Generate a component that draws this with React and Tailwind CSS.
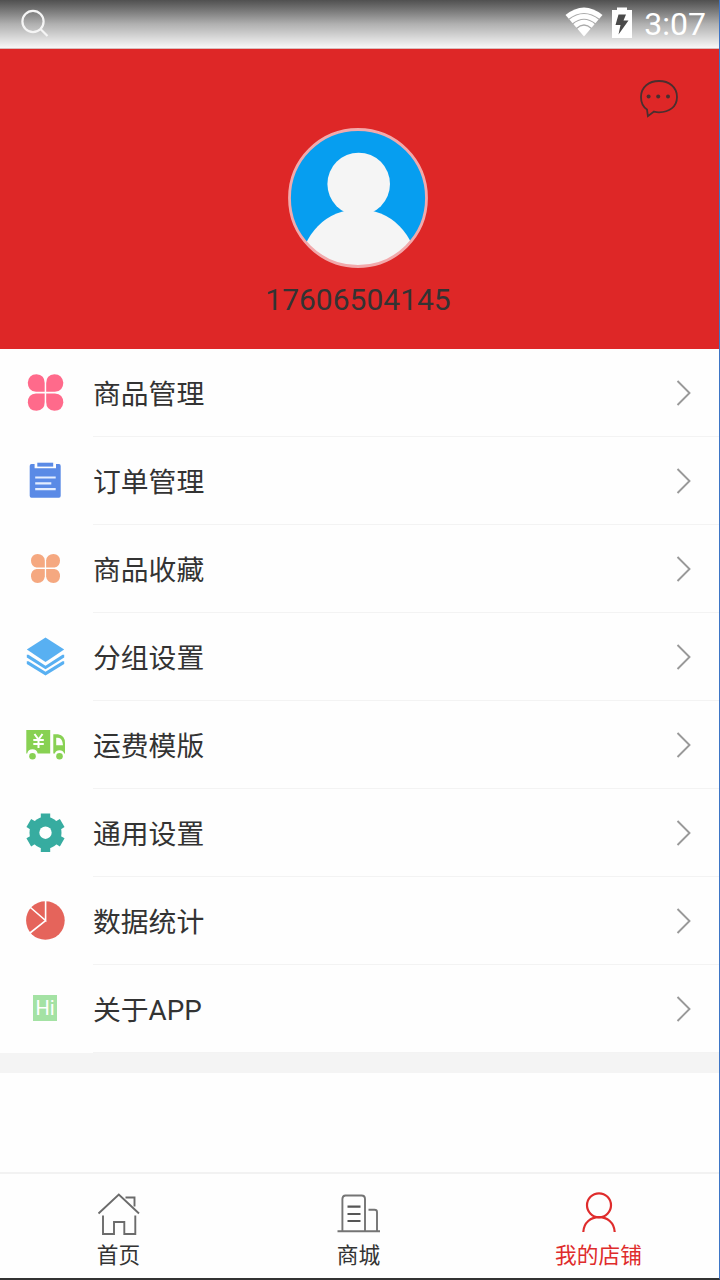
import React from 'react'

// Menu icons share a 40x40 box
const Icon = ({ children }) => (
  <svg viewBox="0 0 40 40" className="w-10 h-10 shrink-0">
    {children}
  </svg>
)

const GoodsIcon = () => (
  <Icon>
    <g fill="#ff6a8b">
      <path d="M19.7 18.8H11Q2.8 18 2.8 9.8Q3.5 1.2 11.5 1.2Q19.7 1.8 19.7 10Z" />
      <path d="M21.2 18.8H29.9Q38.3 18 38.3 9.8Q37.4 1.2 29.4 1.2Q21.2 1.8 21.2 10Z" />
      <path d="M19.7 20.5H11Q2.8 21.3 2.8 29.4Q3.5 37.7 11.5 37.7Q19.7 37.2 19.7 29Z" />
      <path d="M21.2 20.5H29.9Q38.3 21.3 38.3 29.4Q37.4 37.7 29.4 37.7Q21.2 37.2 21.2 29Z" />
    </g>
  </Icon>
)

const OrderIcon = () => (
  <Icon>
    <path d="M6.500 3H9.600V7.200H31V3H34Q35.700 3 35.700 5V34.800Q35.700 36.700 34 36.700H6.500Q4.700 36.700 4.700 34.800V5Q4.700 3 6.500 3Z" fill="#5a8ae6" />
    <path d="M12.300 1.700H28.200V5.600H12.300Z" fill="#5a8ae6" />
    <path d="M10.200 16.500H30.700M10.200 22.400H26.300M10.200 28.200H30.700" stroke="#e3edff" strokeWidth="2.200" />
  </Icon>
)

const FavoriteIcon = () => (
  <Icon>
    <g fill="#f5a880">
      <path d="M19.800 18.500H11.500Q6 17.500 6 11.500Q6.500 5 12.500 5Q19 5 19.800 11.500Z" />
      <path d="M21.100 18.500H29.500Q35 17.500 35 11.500Q34.500 5 28.500 5Q22 5 21.100 11.500Z" />
      <path d="M19.800 20.100H11.500Q6 21 6 27.500Q6.500 34 12.500 34Q19 34 19.800 27.500Z" />
      <path d="M21.100 20.100H29.500Q35 21 35 27.500Q34.500 34 28.500 34Q22 34 21.100 27.500Z" />
    </g>
  </Icon>
)

const GroupIcon = () => (
  <Icon>
    <g fill="#58b0f2">
      <path d="M20.500 0.500L39.200 12.600L20.500 25L1.800 12.600Z" />
      <path d="M1.800 17.800H3.500L20.500 28.700L37.500 17.800H39.200V20.500L20.500 32.200L1.800 20.500Z" />
      <path d="M1.800 24.300H3.500L20.500 34.700L37.500 24.300H39.200V27L20.500 38.400L1.800 27Z" />
    </g>
  </Icon>
)

const FreightIcon = () => (
  <Icon>
    <path d="M1.300 5H25.200V28.500H12.700A5.400 5.400 0 0 0 2.200 28.500H1.300Z" fill="#88d153" />
    <path d="M28.300 9.300H33Q40 10.500 40 18V28.500H39.200A5 5 0 0 0 29.800 28.500H28.300ZM31.200 12.700V20.300H38Q37.500 13 33 12.700Z" fill="#88d153" fillRule="evenodd" />
    <circle cx="7.500" cy="31.300" r="3.300" fill="#88d153" />
    <circle cx="34.500" cy="31.300" r="3.300" fill="#88d153" />
    <path d="M9.500 9L13.500 14.500L17.500 9M8.300 15H18.800M8.300 18.900H18.800M13.500 14V23" stroke="#fff" strokeWidth="2" fill="none" />
  </Icon>
)

const SettingsIcon = () => (
  <Icon>
    <g fill="#37aca0">
      <circle cx="20.500" cy="19.700" r="16" />
      <path d="M15.800 0.400H25.200V5L27 9H14L15.800 5ZM15.800 39H25.200V34.400L27 30.400H14L15.800 34.400Z" />
      <path d="M15.800 0.400H25.200V5L27 9H14L15.800 5ZM15.800 39H25.200V34.400L27 30.400H14L15.800 34.400Z" transform="rotate(60 20.500 19.700)" />
      <path d="M15.800 0.400H25.200V5L27 9H14L15.800 5ZM15.800 39H25.200V34.400L27 30.400H14L15.800 34.400Z" transform="rotate(120 20.500 19.700)" />
    </g>
    <circle cx="20.500" cy="19.700" r="6.200" fill="#fff" />
  </Icon>
)

const StatsIcon = () => (
  <Icon>
    <circle cx="20.400" cy="19.500" r="19.300" fill="#e5645b" />
    <path d="M20.600 0V19.600L5.500 6.500M20.600 19.600L5 32" stroke="#fff" strokeWidth="1.600" fill="none" />
  </Icon>
)

const AboutIcon = () => (
  <div className="w-10 h-10 shrink-0 flex items-start justify-center pt-1.5">
    <span className="w-6 h-[26px] bg-[#a4e2a4] text-white text-[20px] leading-[26px] text-center">
      Hi
    </span>
  </div>
)

const menuItems = [
  { label: '商品管理', icon: GoodsIcon },
  { label: '订单管理', icon: OrderIcon },
  { label: '商品收藏', icon: FavoriteIcon },
  { label: '分组设置', icon: GroupIcon },
  { label: '运费模版', icon: FreightIcon },
  { label: '通用设置', icon: SettingsIcon },
  { label: '数据统计', icon: StatsIcon },
  { label: '关于APP', icon: AboutIcon },
]

const HomeIcon = () => (
  <svg viewBox="0 0 44 44" className="w-11 h-11" fill="none" stroke="#6b6b6b" strokeWidth="1.900">
    <path d="M1.500 22.500L21.800 3.500L42 22.500M28.500 6.500H37.500V15.500M6 24.500V43H17V31H27.300V43H38.300V24.500" />
  </svg>
)

const MallIcon = () => (
  <svg viewBox="0 0 44 44" className="w-11 h-11" fill="none" stroke="#747474" strokeWidth="1.900">
    <path d="M0.500 40.300H43M5.400 40V8Q5.400 4.500 8.500 4.500H24.500Q28 4.500 28 8V40M31.500 18.700H37.500Q40 18.700 40 21V40" />
    <path d="M10.500 15.700H23.500M10.500 23H23.500M10.500 30H23.500" stroke="#555" strokeWidth="2.200" />
  </svg>
)

const ShopIcon = () => (
  <svg viewBox="0 0 44 44" className="w-11 h-11" fill="none" stroke="#df2c2c" strokeWidth="2.200">
    <circle cx="22" cy="14.300" r="12" />
    <path d="M6.300 41C6.800 31.500 13.800 26.200 22 26.200S37.200 31.500 37.700 41" />
  </svg>
)

const tabs = [
  { label: '首页', icon: HomeIcon },
  { label: '商城', icon: MallIcon },
  { label: '我的店铺', icon: ShopIcon, active: true },
]

const StatusBar = () => (
  <header className="h-[49px] shrink-0 flex items-center justify-between pl-5 pr-[13px] border-b border-[#d8bcbc] bg-linear-to-b from-[#505050] via-[#b0b0b0] to-[#f8f8f8]">
    <svg viewBox="0 0 30 30" className="w-[30px] h-[30px]" fill="none" stroke="#f5f5f5" strokeWidth="2.200">
      <circle cx="13" cy="12.500" r="10.600" />
      <path d="M20.500 20L27.500 27" />
    </svg>
    <div className="flex items-center">
      <svg viewBox="0 0 38 30" className="w-[38px] h-[30px] mb-1">
        <path d="M0.500 8Q19 -7 37.500 8L19 29.500Z" fill="#fff" />
        <path d="M3.500 12.500Q19 0.500 34.500 12.500M7.500 17Q19 7.500 30.500 17M11.500 21.500Q19 14.500 26.500 21.500" fill="none" stroke="#aaa" strokeWidth="1.200" />
      </svg>
      <svg viewBox="0 0 22 32" className="w-[22px] h-8 ml-2 mb-0.5">
        <path d="M1 3H6V0.500H16V3H21V31H1Z" fill="#fff" />
        <path d="M7.500 7.500H15L12.500 13.500H17.500L7.500 27.500L9.500 18H4.500Z" fill="#4a4a4a" />
      </svg>
      <span className="ml-[11px] text-[32px] leading-[48px] text-white">3:07</span>
    </div>
  </header>
)

const Profile = () => (
  <section className="relative h-[300px] shrink-0 flex flex-col items-center pt-[79px] pr-[3px] bg-[#de2727]">
    <svg viewBox="0 0 40 40" className="absolute top-[29px] right-[40px] w-10 h-10" fill="none" stroke="#4a2f2f" strokeWidth="1.800">
      <path d="M8 31.500C3.500 28.500 2 24 2 19C2 9 10 3 20 3S38 9 38 19S30 34.300 20 34.300C18 34.300 16.500 34 15 33.600L8.900 38.200Z" />
      <g fill="#4a2f2f" stroke="none">
        <circle cx="9.600" cy="18.500" r="2" />
        <circle cx="19.200" cy="18.500" r="2" />
        <circle cx="29" cy="18.500" r="2" />
      </g>
    </svg>
    <svg viewBox="0 0 140 140" className="w-[140px] h-[140px] shrink-0">
      <defs>
        <clipPath id="avatar">
          <circle cx="70" cy="70" r="69" />
        </clipPath>
      </defs>
      <g clipPath="url(#avatar)">
        <rect width="140" height="140" fill="#069ef0" />
        <circle cx="70.700" cy="56" r="31.300" fill="#f5f5f5" />
        <circle cx="70.700" cy="139" r="57.800" fill="#f5f5f5" />
      </g>
      <circle cx="70" cy="70" r="68.500" fill="none" stroke="#f2a9ab" strokeWidth="2.800" />
    </svg>
    <p className="mt-[12px] text-[30px] leading-[40px] text-[#333]">17606504145</p>
  </section>
)

const MenuRow = ({ label, icon: RowIcon }) => (
  <li className="h-[88px] flex items-center pl-[25px]">
    <RowIcon />
    <div className="flex-1 h-full ml-7 pr-7 flex items-center justify-between border-b border-[#f3f3f3]">
      <span className="pt-[5px] text-[27.800px] leading-10 text-[#333]">{label}</span>
      <svg viewBox="0 0 15 26" className="w-[15px] h-[26px]" fill="none" stroke="#999" strokeWidth="1.900">
        <path d="M1.500 1L13.500 13L1.500 25" />
      </svg>
    </div>
  </li>
)

const TabBar = () => (
  <nav className="h-[106px] shrink-0 flex border-t-2 border-[#f2f2f2] overflow-hidden">
    {tabs.map(({ label, icon: TabIcon, active }) => (
      <button key={label} className="w-60 -ml-[1.500px] mr-[1.500px] shrink-0 flex flex-col items-center pt-[17px]">
        <TabIcon />
        <span className={active ? 'mt-[5px] text-[21.700px] leading-8 text-[#df2c2c]' : 'mt-[5px] text-[21.700px] leading-8 text-[#333]'}>
          {label}
        </span>
      </button>
    ))}
  </nav>
)

export default function App() {
  return (
    <div className="w-[720px] h-[1280px] flex flex-col overflow-hidden bg-[#fefefe] border-r border-r-[#3d75c6] border-b-2 border-b-[#333] font-['Roboto','Noto_Sans_CJK_SC',sans-serif]">
      <StatusBar />
      <Profile />
      <ul className="shrink-0">
        {menuItems.map((item) => (
          <MenuRow key={item.label} {...item} />
        ))}
      </ul>
      <div className="h-5 shrink-0 bg-[#f4f4f4]" />
      <main className="flex-1" />
      <TabBar />
    </div>
  )
}
